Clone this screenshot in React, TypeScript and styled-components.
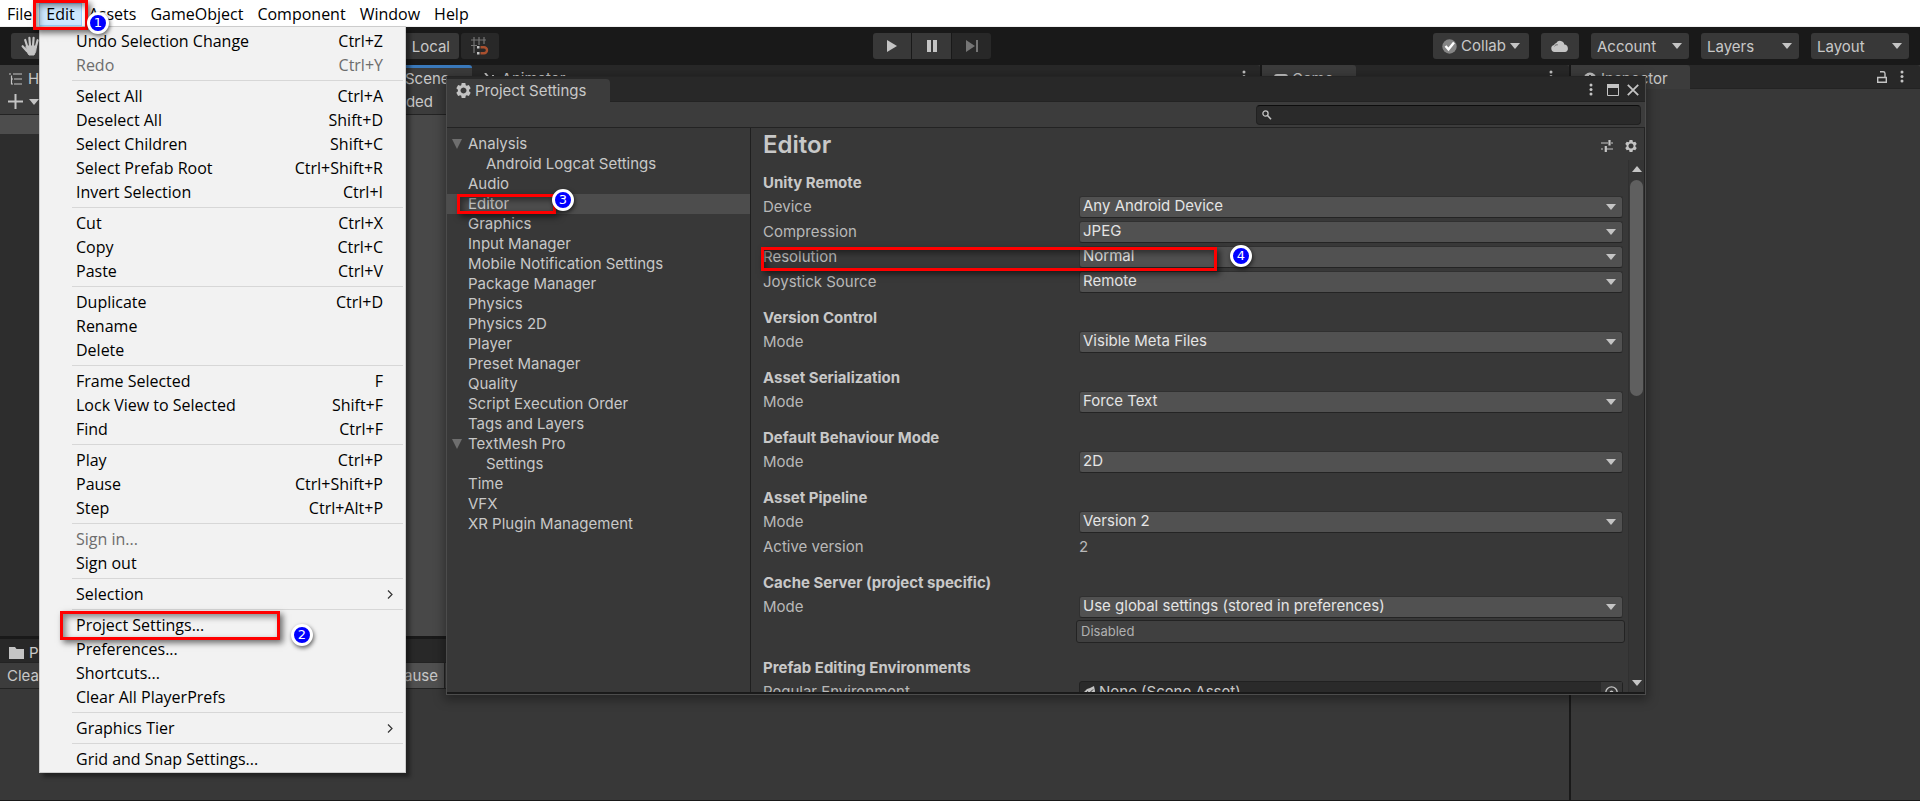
import React from 'react';
import styled, { createGlobalStyle, css } from 'styled-components';

const ui = '"Inter", "Liberation Sans", sans-serif';
const native = '"Open Sans", "Noto Sans CJK SC", sans-serif';

const GlobalStyle = createGlobalStyle`
  *, *::before, *::after { box-sizing: border-box; }
  body { margin: 0; background: #191919; overflow: hidden; }
  button, input, select { font: inherit; color: inherit; margin: 0; }
  h1, h2, ul { margin: 0; padding: 0; }
  ul { list-style: none; }
`;

/* ---------- window frame ---------- */

const Window = styled.div`
  position: relative;
  display: flex;
  flex-direction: column;
  height: 100vh;
  overflow: hidden;
  background: #191919;
  color: #c8c8c8;
  font: 15px/20px ${ui};
`;

const MenuBar = styled.nav`
  display: flex;
  flex: none;
  height: 27px;
  padding-top: 3px;
  background: #fff;
  border-bottom: 1px solid #f0f0f0;
  font: 16px/23px ${native};
`;

const MenuTitle = styled.button<{ $open?: boolean }>`
  height: 23px;
  padding: 0 7px;
  border: 0;
  background: ${(p) => (p.$open ? '#cce8ff' : 'transparent')};
  box-shadow: ${(p) => (p.$open ? 'inset 0 0 0 1px #99d1ff' : 'none')};
  color: #000;
`;

const Toolbar = styled.header`
  display: flex;
  flex: none;
  align-items: center;
  height: 38px;
`;

const ToolGroup = styled.div`
  display: flex;
  gap: 2px;
  flex: 0 0 calc(50% - 87px);
  padding-left: 11px;
`;

const PlayGroup = styled.div`
  display: flex;
  gap: 1px;
`;

const AccountGroup = styled.div`
  display: flex;
  gap: 12px;
  margin-left: auto;
  padding-right: 11px;
`;

const ToolButton = styled.button<{ $width: number; $dim?: boolean; $radius?: string }>`
  display: flex;
  align-items: center;
  justify-content: center;
  gap: 4px;
  width: ${(p) => p.$width}px;
  height: 26px;
  padding: 0;
  border: 0;
  border-radius: ${(p) => p.$radius || '3px'};
  background: ${(p) => (p.$dim ? '#282828' : '#383838')};
  color: #c8c8c8;
`;

const HandButton = styled(ToolButton)`
  justify-content: flex-start;
  padding-left: 10px;
`;

const LocalButton = styled(ToolButton)`
  justify-content: flex-end;
  margin-left: 322px;
  padding: 2px 9px 0 0;
`;

const SelectBox = styled.span<{ $width?: number }>`
  position: relative;
  display: block;
  align-self: start;
  width: ${(p) => (p.$width ? p.$width + 'px' : '100%')};
`;

const ToolSelect = styled.select`
  display: block;
  appearance: none;
  width: 100%;
  height: 26px;
  padding: 2px 6px 0;
  border: 0;
  border-radius: 3px;
  background: #383838;
  color: #c8c8c8;
`;

const SelectArrow = styled.svg`
  position: absolute;
  right: 7px;
  top: 50%;
  margin-top: -3px;
  pointer-events: none;
`;

/* ---------- docked panels ---------- */

const Workspace = styled.main`
  display: flex;
  flex: 1;
  min-height: 0;
  gap: 2px;
  padding-bottom: 1px;
`;

const MainColumn = styled.div`
  display: flex;
  flex: 1;
  flex-direction: column;
  min-width: 0;
  gap: 3px;
`;

const PanelRow = styled.div`
  display: flex;
  flex: 1;
  gap: 2px;
  min-height: 0;
`;

const Panel = styled.section<{ $basis?: number }>`
  display: flex;
  flex-direction: column;
  flex: ${(p) => (p.$basis ? `0 0 ${p.$basis}px` : '1')};
  min-width: 0;
  background: #383838;
`;

const ConsolePanel = styled(Panel)`
  flex: 0 0 161px;
`;

const TabStrip = styled.div`
  display: flex;
  flex: none;
  height: 24px;
  background: #282828;
  border-bottom: 1px solid #232323;
  border-radius: 0 3px 0 0;
`;

const Tab = styled.button<{ $active?: boolean; $focused?: boolean; $tight?: boolean }>`
  display: flex;
  align-items: center;
  gap: ${(p) => (p.$tight ? 5 : 4)}px;
  height: 24px;
  padding: ${(p) => (p.$tight ? '0 22px 0 9px' : '0 22px 0 12px')};
  border: 0;
  border-top: 3px solid transparent;
  border-radius: 0 3px 0 0;
  background: transparent;
  color: #c8c8c8;
  line-height: 20px;
  ${(p) => p.$active && css`background: #3c3c3c;`}
  ${(p) => p.$focused && css`border-top-color: #3a79bb;`}
`;

const StripTools = styled.div<{ $inset?: number }>`
  display: flex;
  align-items: center;
  gap: 13px;
  margin-left: auto;
  padding-right: ${(p) => p.$inset || 14}px;
`;

const PanelTools = styled.div`
  display: flex;
  flex: none;
  align-items: center;
  height: 26px;
  background: #3c3c3c;
  border-bottom: 1px solid #232323;
`;

const HierarchyTools = styled(PanelTools)`
  gap: 6px;
  padding-left: 8px;
`;

const SceneTools = styled(PanelTools)`
  padding-left: 4px;
`;

const ConsoleLeft = styled.div`
  display: flex;
  align-items: center;
  justify-content: space-between;
  flex: 0 0 445px;
  height: 25px;
  border-right: 1px solid #232323;
`;

const FlatButton = styled.button<{ $pressed?: boolean }>`
  height: 25px;
  padding: 0 6px 0 7px;
  border: 0;
  background: ${(p) => (p.$pressed ? '#505050' : 'transparent')};
  color: #c8c8c8;
`;

const HierarchyBody = styled.div`
  flex: 1;
  background: #2d2d2d;
`;

const SceneHeading = styled.div`
  height: 19px;
  background: #4d4d4d;
`;

const SceneView = styled.div`
  flex: 1;
  background: #484848;
`;

/* ---------- drop-down menu ---------- */

const DropMenu = styled.div`
  position: absolute;
  left: 39px;
  top: 26px;
  width: 367px;
  padding: 3px 2px 0 2px;
  border: 1px solid #ccc;
  background: #f2f2f2;
  box-shadow: 4px 4px 4px rgba(0, 0, 0, 0.4);
  color: #000;
  font: 16px/22px ${native};
`;

const MenuItem = styled.button<{ $muted?: boolean }>`
  display: flex;
  align-items: center;
  justify-content: space-between;
  width: 100%;
  height: 24px;
  padding: 0 20px 2px 34px;
  border: 0;
  background: transparent;
  color: ${(p) => (p.$muted ? '#6d6d6d' : '#000')};
  text-align: left;
`;

const SubmenuArrow = styled.svg`
  margin-right: -10px;
`;

const MenuRule = styled.hr`
  height: 1px;
  margin: 2px 0 4px 30px;
  border: 0;
  background: #d7d7d7;
`;

/* ---------- settings window ---------- */

const Dialog = styled.section`
  position: absolute;
  left: 446px;
  right: 274px;
  top: 76px;
  bottom: 106px;
  display: flex;
  flex-direction: column;
  border: 1px solid #4c4c4c;
  border-top-color: #242424;
  background: #383838;
  box-shadow: 0 3px 10px 2px rgba(0, 0, 0, 0.35);
`;

const DialogStrip = styled.div`
  display: flex;
  flex: none;
  align-items: flex-end;
  height: 25px;
  background: #282828;
  box-shadow: inset 0 -1px #232323;
`;

const DialogTab = styled.button`
  display: flex;
  align-items: center;
  gap: 4px;
  height: 23px;
  padding: 0 24px 0 9px;
  border: 0;
  border-radius: 0 4px 0 0;
  background: #3c3c3c;
  color: #c8c8c8;
`;

const WindowButtons = styled.div`
  display: flex;
  align-items: center;
  gap: 8px;
  height: 25px;
  margin-left: auto;
  padding-right: 6px;
`;

const IconButton = styled.button<{ $width?: number }>`
  display: flex;
  align-items: center;
  justify-content: center;
  width: ${(p) => p.$width || 12}px;
  padding: 0;
  border: 0;
  background: transparent;
  color: #c4c4c4;
`;

const SearchBar = styled.div`
  display: flex;
  flex: none;
  justify-content: flex-end;
  align-items: center;
  height: 26px;
  padding-right: 4px;
  background: #3c3c3c;
  border-bottom: 1px solid #232323;
`;

const SearchBox = styled.label`
  display: flex;
  align-items: center;
  gap: 4px;
  width: 385px;
  height: 20px;
  padding-left: 5px;
  border: 1px solid #212121;
  border-top-color: #0d0d0d;
  border-radius: 4px;
  background: #2a2a2a;
`;

const SearchInput = styled.input`
  flex: 1;
  min-width: 0;
  height: 18px;
  padding: 0;
  border: 0;
  outline: 0;
  background: transparent;
`;

const DialogBody = styled.div`
  display: flex;
  flex: 1;
  min-height: 0;
  border-bottom: 2px solid #1a1a1a;
  border-right: 1px solid #232323;
`;

const Tree = styled.ul`
  flex: 0 0 304px;
  padding-top: 6px;
  border-right: 1px solid #1f1f1f;
`;

const TreeItem = styled.li<{ $nested?: boolean; $selected?: boolean }>`
  display: flex;
  align-items: center;
  height: 20px;
  padding-left: ${(p) => (p.$nested ? 39 : 5)}px;
  background: ${(p) => (p.$selected ? '#4d4d4d' : 'transparent')};
`;

const Disclosure = styled.span`
  display: flex;
  width: 16px;
`;

const Page = styled.div`
  display: flex;
  flex: 1;
  flex-direction: column;
  min-width: 0;
`;

const PageHead = styled.div`
  display: flex;
  flex: none;
  align-items: center;
  justify-content: space-between;
  height: 32px;
  padding: 2px 7px 0 12px;
`;

const PageTitle = styled.h1`
  font-size: 24px;
  line-height: 30px;
  font-weight: 600;
`;

const PageIcons = styled.div`
  display: flex;
  align-items: center;
  gap: 12px;
  padding-top: 2px;
`;

const ScrollArea = styled.div`
  display: flex;
  flex: 1;
  min-height: 0;
`;

const Form = styled.form`
  flex: 1;
  min-width: 0;
  overflow: hidden;
  padding: 11px 5px 0 12px;
`;

const Group = styled.fieldset`
  margin: 0 0 10px;
  padding: 0;
  border: 0;
  min-width: 0;
`;

const GroupTitle = styled.legend`
  display: block;
  height: 25px;
  padding: 0;
  font-weight: 700;
  line-height: 23px;
`;

const Row = styled.div`
  display: grid;
  grid-template-columns: 316px minmax(0, 1fr);
  height: 25px;
  color: #b8b8b8;
  line-height: 22px;
`;

const FieldSelect = styled.select`
  display: block;
  appearance: none;
  width: 100%;
  height: 22px;
  padding: 0 3px 2px;
  border: 1px solid #303030;
  border-bottom-color: #242424;
  border-radius: 3px;
  background: #515151;
  color: #e4e4e4;
  line-height: 18px;
`;

const HelpBox = styled.div`
  grid-column: 2;
  height: 23px;
  margin: -1px -2px 0 -3px;
  padding-left: 4px;
  border: 1px solid #232323;
  border-radius: 3px;
  background: #404040;
  color: #b0b0b0;
  font-size: 13px;
  line-height: 21px;
`;

const ObjectField = styled.button`
  display: flex;
  align-items: center;
  gap: 4px;
  height: 22px;
  padding: 0 0 0 4px;
  border: 1px solid #212121;
  border-radius: 3px;
  background: #2a2a2a;
  color: #c8c8c8;
`;

const ObjectPicker = styled.span`
  display: flex;
  align-items: center;
  justify-content: center;
  width: 21px;
  height: 20px;
  margin-left: auto;
  background: #373737;
`;

const ScrollBar = styled.div`
  display: flex;
  flex: 0 0 16px;
  flex-direction: column;
  align-items: center;
  padding: 6px 0;
  border-left: 1px solid #303030;
  background: #353535;
`;

const ScrollTrack = styled.div`
  flex: 1;
  margin: 8px 0;
`;

const ScrollThumb = styled.div`
  width: 13px;
  height: 44%;
  border-radius: 7px;
  background: #5f5f5f;
`;

/* ---------- callouts over the window ---------- */

const Frame = styled.div<{ $x: number; $y: number; $w: number; $h: number }>`
  position: absolute;
  left: ${(p) => p.$x}px;
  top: ${(p) => p.$y}px;
  width: ${(p) => p.$w}px;
  height: ${(p) => p.$h}px;
  border: 3px solid #f00;
  box-shadow: 3px 3px 6px rgba(0, 0, 0, 0.55), inset 3px 3px 6px rgba(0, 0, 0, 0.45);
  pointer-events: none;
`;

const Badge = styled.span<{ $x: number; $y: number }>`
  position: absolute;
  left: ${(p) => p.$x - 11}px;
  top: ${(p) => p.$y - 11}px;
  width: 22px;
  height: 22px;
  border: 3px solid #fff;
  border-radius: 50%;
  background: #00f;
  box-shadow: 1px 2px 4px rgba(0, 0, 0, 0.6);
  color: #fff;
  font: 13px/16px "DejaVu Sans", sans-serif;
  text-align: center;
`;

/* ---------- icons ---------- */

const Caret = ({ w = 10, h = 6, color = '#c4c4c4', up = false }) => (
  <svg width={w} height={h} viewBox="0 0 10 6" preserveAspectRatio="none" fill={color} aria-hidden="true">
    <path d={up ? 'M0 6h10L5 0z' : 'M0 0h10L5 6z'} />
  </svg>
);

const Kebab = () => (
  <svg width="4" height="13" viewBox="0 0 4 13" fill="#c4c4c4" aria-hidden="true">
    <circle cx="2" cy="2" r="1.5" /><circle cx="2" cy="6.5" r="1.5" /><circle cx="2" cy="11" r="1.5" />
  </svg>
);

const Gear = ({ size = 14, hole = 2.6 }) => (
  <svg width={size} height={size} viewBox="0 0 14 14" aria-hidden="true">
    <path
      fill="#c4c4c4"
      fillRule="evenodd"
      d={`M5.3 0h3.4l.4 2 .9.5 2-.6 1.7 2.9L12.2 6.2v1.600l1.500 1.400-1.700 2.900-2-.6-.9.5-.4 2H5.300l-.4-2-.9-.5-2 .6L.3 9.200l1.500-1.400V6.200L.3 4.800 2 1.900l2 .6.9-.5zM7 ${7 - hole}a${hole} ${hole} 0 1 0 .01 0z`}
    />
  </svg>
);

const Hand = () => (
  <svg width="20" height="20" viewBox="0 0 20 20" fill="none" stroke="#c4c4c4" strokeLinecap="round" aria-hidden="true">
    <path strokeWidth="2.2" d="M4.200 4l2.200 7M8.400 1.800l.6 8M12.600 1.800L12 10M16.600 4.200L14.800 11M1.600 10.200l4 4.500" />
    <path fill="#c4c4c4" strokeWidth="1" d="M5.500 10h10l-.8 5.500-1.700 3.500H8L5 14.500z" />
  </svg>
);

const SnapGrid = () => (
  <svg width="18" height="18" viewBox="0 0 18 18" fill="none" aria-hidden="true">
    <path stroke="#757575" strokeWidth="1.2" d="M3 0v16M8 0v8M13 0v7M0 3h15M0 8.500h6" />
    <path stroke="#a9502f" strokeWidth="2.4" d="M9.500 10.200h3.500a3 3 0 0 1 0 6H9.500" />
    <path fill="#c4c4c4" d="M6 9h2.500v2.400H6zM6 15h2.500v2.400H6z" />
  </svg>
);

const Cloud = () => (
  <svg width="18" height="12" viewBox="0 0 18 12" fill="#c4c4c4" aria-hidden="true">
    <path d="M3.500 12A3.500 3.500 0 0 1 3 5.100 3.200 3.200 0 0 1 5.300 3 4.300 4.300 0 0 1 13.300 4.600 3.800 3.800 0 0 1 14.300 12z" />
    <path d="M3.500 6.200a3 3 0 0 1 3.300-1.400" stroke="#6a6a6a" strokeWidth="1" fill="none" />
  </svg>
);

const CheckBall = () => (
  <svg width="15" height="15" viewBox="0 0 15 15" aria-hidden="true">
    <circle cx="7.5" cy="7.5" r="7.2" fill="#858585" />
    <path d="M3.500 7l3 3.300L12 3.600" fill="none" stroke="#fff" strokeWidth="2.4" />
  </svg>
);

const ListIcon = () => (
  <svg width="14" height="12" viewBox="0 0 14 12" fill="none" stroke="#c4c4c4" strokeWidth="1.2" aria-hidden="true">
    <path d="M0 1h2M4 1h9M5 6h8M5 11h8M2.500 2.500v9M2.500 6h1.500M2.500 11h1.500" />
  </svg>
);

const Folder = () => (
  <svg width="15" height="12" viewBox="0 0 15 12" fill="#c4c4c4" aria-hidden="true">
    <path d="M0 0h6l1.500 2H15v10H0z" />
  </svg>
);

const Plus = () => (
  <svg width="15" height="15" viewBox="0 0 15 15" stroke="#c4c4c4" strokeWidth="2" aria-hidden="true">
    <path d="M7.500 0v15M0 7.500h15" />
  </svg>
);

const Lock = () => (
  <svg width="10" height="12" viewBox="0 0 10 12" fill="none" stroke="#c4c4c4" strokeWidth="1.4" aria-hidden="true">
    <path d="M.7 6.500h8.600v4.800H.7zM8 6V2.500A1.800 1.800 0 0 0 6.200.8H3" />
  </svg>
);

const InfoBall = () => (
  <svg width="14" height="14" viewBox="0 0 14 14" aria-hidden="true">
    <circle cx="7" cy="7" r="6.5" fill="#c4c4c4" />
    <path d="M6 3h2v2H6zM6 6h2v5H6z" fill="#3c3c3c" />
  </svg>
);

const SlidersIcon = () => (
  <svg width="12" height="12" viewBox="0 0 12 12" fill="none" stroke="#c4c4c4" aria-hidden="true">
    <path strokeWidth="1.2" d="M0 3h7M10 3h2M0 9h2M5 9h7" />
    <path strokeWidth="2.2" d="M8.500 0v5.500M4.800 6v6" />
  </svg>
);

const menu: (null | [string, string?, ('muted' | 'sub')?])[] = [
  ['Undo Selection Change', 'Ctrl+Z'], ['Redo', 'Ctrl+Y', 'muted'], null,
  ['Select All', 'Ctrl+A'], ['Deselect All', 'Shift+D'], ['Select Children', 'Shift+C'],
  ['Select Prefab Root', 'Ctrl+Shift+R'], ['Invert Selection', 'Ctrl+I'], null,
  ['Cut', 'Ctrl+X'], ['Copy', 'Ctrl+C'], ['Paste', 'Ctrl+V'], null,
  ['Duplicate', 'Ctrl+D'], ['Rename'], ['Delete'], null,
  ['Frame Selected', 'F'], ['Lock View to Selected', 'Shift+F'], ['Find', 'Ctrl+F'], null,
  ['Play', 'Ctrl+P'], ['Pause', 'Ctrl+Shift+P'], ['Step', 'Ctrl+Alt+P'], null,
  ['Sign in...', '', 'muted'], ['Sign out'], null,
  ['Selection', '', 'sub'], null,
  ['Project Settings...'], ['Preferences...'], ['Shortcuts...'], ['Clear All PlayerPrefs'], null,
  ['Graphics Tier', '', 'sub'], null,
  ['Grid and Snap Settings...'],
];

const tree: [string, ('open' | 'nested' | 'selected')?][] = [
  ['Analysis', 'open'], ['Android Logcat Settings', 'nested'], ['Audio'], ['Editor', 'selected'],
  ['Graphics'], ['Input Manager'], ['Mobile Notification Settings'], ['Package Manager'],
  ['Physics'], ['Physics 2D'], ['Player'], ['Preset Manager'], ['Quality'],
  ['Script Execution Order'], ['Tags and Layers'], ['TextMesh Pro', 'open'], ['Settings', 'nested'],
  ['Time'], ['VFX'], ['XR Plugin Management'],
];

const Arrow = () => (
  <SelectArrow width="10" height="6" viewBox="0 0 10 6" fill="#c4c4c4" aria-hidden="true">
    <path d="M0 0h10L5 6z" />
  </SelectArrow>
);

const Option = ({ id, label, value }: { id: string; label: string; value: string }) => (
  <Row>
    <label htmlFor={id}>{label}</label>
    <SelectBox>
      <FieldSelect id={id}><option>{value}</option></FieldSelect>
      <Arrow />
    </SelectBox>
  </Row>
);

const ToolDropdown = ({ label }: { label: string }) => (
  <SelectBox $width={98}>
    <ToolSelect aria-label={label}><option>{label}</option></ToolSelect>
    <Arrow />
  </SelectBox>
);

export default function App() {
  return (
    <Window>
      <GlobalStyle />
      <MenuBar>
        {['File', 'Edit', 'Assets', 'GameObject', 'Component', 'Window', 'Help'].map((t) => (
          <MenuTitle key={t} $open={t === 'Edit'}>{t}</MenuTitle>
        ))}
      </MenuBar>

      <Toolbar>
        <ToolGroup>
          <HandButton $width={40} aria-label="Hand tool"><Hand /></HandButton>
          <LocalButton $width={84}>Local</LocalButton>
          <ToolButton $width={38} $dim aria-label="Grid snapping"><SnapGrid /></ToolButton>
        </ToolGroup>
        <PlayGroup>
          <ToolButton $width={38} $radius="3px 0 0 3px" aria-label="Play">
            <svg width="10" height="12" viewBox="0 0 10 12" fill="#c4c4c4"><path d="M0 0l10 6-10 6z" /></svg>
          </ToolButton>
          <ToolButton $width={39} $radius="0" aria-label="Pause">
            <svg width="10" height="12" viewBox="0 0 10 12" fill="#c4c4c4"><path d="M0 0h4v12H0zM6 0h4v12H6z" /></svg>
          </ToolButton>
          <ToolButton $width={39} $radius="0 3px 3px 0" $dim aria-label="Step">
            <svg width="12" height="12" viewBox="0 0 12 12" fill="#757575"><path d="M0 0l9 6-9 6zM10 0h2v12h-2z" /></svg>
          </ToolButton>
        </PlayGroup>
        <AccountGroup>
          <ToolButton $width={96}><CheckBall />Collab<Caret /></ToolButton>
          <ToolButton $width={38} aria-label="Services"><Cloud /></ToolButton>
          <ToolDropdown label="Account" />
          <ToolDropdown label="Layers" />
          <ToolDropdown label="Layout" />
        </AccountGroup>
      </Toolbar>

      <Workspace>
        <MainColumn>
          <PanelRow>
            <Panel $basis={373}>
              <TabStrip><Tab $active $tight><ListIcon />Hierarchy</Tab></TabStrip>
              <HierarchyTools><Plus /><Caret /></HierarchyTools>
              <HierarchyBody><SceneHeading /></HierarchyBody>
            </Panel>
            <Panel>
              <TabStrip>
                <Tab $active $focused>
                  <svg width="14" height="12" viewBox="0 0 14 12" stroke="#c4c4c4" fill="none"><path d="M4 0v12M10 0v12M0 4h14M0 8h14" /></svg>
                  Scene
                </Tab>
                <Tab>
                  <svg width="14" height="12" viewBox="0 0 14 12" stroke="#c4c4c4" strokeWidth="2" fill="none"><path d="M1 0l4 5-4 5M8 3h2M8 8h5" /></svg>
                  Animator
                </Tab>
                <StripTools><Kebab /></StripTools>
              </TabStrip>
              <SceneTools>Shaded</SceneTools>
              <SceneView />
            </Panel>
            <Panel $basis={307}>
              <TabStrip>
                <Tab $active>
                  <svg width="14" height="10" viewBox="0 0 14 10" fill="#c4c4c4"><rect width="14" height="10" rx="3" /></svg>
                  Game
                </Tab>
                <StripTools $inset={16}><Kebab /></StripTools>
              </TabStrip>
            </Panel>
          </PanelRow>
          <ConsolePanel>
            <TabStrip><Tab $tight><Folder />Project</Tab></TabStrip>
            <PanelTools>
              <ConsoleLeft>
                <FlatButton>Clear</FlatButton>
                <FlatButton $pressed>Error Pause</FlatButton>
              </ConsoleLeft>
            </PanelTools>
          </ConsolePanel>
        </MainColumn>
        <Panel $basis={349}>
          <TabStrip>
            <Tab $active><InfoBall />Inspector</Tab>
            <StripTools $inset={16}><Lock /><Kebab /></StripTools>
          </TabStrip>
        </Panel>
      </Workspace>

      <Dialog aria-label="Project Settings">
        <DialogStrip>
          <DialogTab><Gear size={15} hole={2.8} />Project Settings</DialogTab>
          <WindowButtons>
            <IconButton $width={16} aria-label="More"><Kebab /></IconButton>
            <IconButton aria-label="Maximize">
              <svg width="12" height="12" viewBox="0 0 12 12"><path d="M.5.5h11v11H.5z" fill="none" stroke="#c4c4c4" /><path d="M0 0h12v4H0z" fill="#c4c4c4" /></svg>
            </IconButton>
            <IconButton aria-label="Close">
              <svg width="12" height="12" viewBox="0 0 12 12" stroke="#c4c4c4" strokeWidth="1.8"><path d="M.8.8l10.400 10.400M11.200.8L.8 11.200" /></svg>
            </IconButton>
          </WindowButtons>
        </DialogStrip>
        <SearchBar>
          <SearchBox>
            <svg width="10" height="10" viewBox="0 0 10 10" fill="none" stroke="#c4c4c4"><circle cx="3.5" cy="3.5" r="2.6" strokeWidth="1.3" /><path d="M5.500 5.500L9 9.200" strokeWidth="1.6" /></svg>
            <SearchInput aria-label="Search settings" />
          </SearchBox>
        </SearchBar>
        <DialogBody>
          <Tree>
            {tree.map(([name, kind]) => (
              <TreeItem key={name} $nested={kind === 'nested'} $selected={kind === 'selected'}>
                {kind !== 'nested' && (
                  <Disclosure>{kind === 'open' && <Caret w={10} h={10} color="#6e6e6e" />}</Disclosure>
                )}
                {name}
              </TreeItem>
            ))}
          </Tree>
          <Page>
            <PageHead>
              <PageTitle>Editor</PageTitle>
              <PageIcons>
                <IconButton aria-label="Presets"><SlidersIcon /></IconButton>
                <IconButton aria-label="Options"><Gear size={12} hole={3} /></IconButton>
              </PageIcons>
            </PageHead>
            <ScrollArea>
              <Form>
                <Group>
                  <GroupTitle>Unity Remote</GroupTitle>
                  <Option id="device" label="Device" value="Any Android Device" />
                  <Option id="compression" label="Compression" value="JPEG" />
                  <Option id="resolution" label="Resolution" value="Normal" />
                  <Option id="joystick" label="Joystick Source" value="Remote" />
                </Group>
                <Group>
                  <GroupTitle>Version Control</GroupTitle>
                  <Option id="vcs" label="Mode" value="Visible Meta Files" />
                </Group>
                <Group>
                  <GroupTitle>Asset Serialization</GroupTitle>
                  <Option id="serialization" label="Mode" value="Force Text" />
                </Group>
                <Group>
                  <GroupTitle>Default Behaviour Mode</GroupTitle>
                  <Option id="behaviour" label="Mode" value="2D" />
                </Group>
                <Group>
                  <GroupTitle>Asset Pipeline</GroupTitle>
                  <Option id="pipeline" label="Mode" value="Version 2" />
                  <Row><span>Active version</span><span>2</span></Row>
                </Group>
                <Group>
                  <GroupTitle>Cache Server (project specific)</GroupTitle>
                  <Option id="cache" label="Mode" value="Use global settings (stored in preferences)" />
                  <Row><HelpBox>Disabled</HelpBox></Row>
                </Group>
                <Group>
                  <GroupTitle>Prefab Editing Environments</GroupTitle>
                  <Row>
                    <label htmlFor="environment">Regular Environment</label>
                    <ObjectField id="environment" type="button">
                      <svg width="11" height="12" viewBox="0 0 11 12" fill="#c4c4c4"><path d="M0 6l3-3 3-1 4-2 1 5-1 7-2-1V7L6 9 5 12l-2-1 1-3-3 1z" /><path d="M3 5.500l2.500 1.500L9 3.500" stroke="#2a2a2a" fill="none" /></svg>
                      None (Scene Asset)
                      <ObjectPicker>
                        <svg width="13" height="13" viewBox="0 0 13 13"><circle cx="6.5" cy="6.5" r="5.7" fill="none" stroke="#c4c4c4" strokeWidth="1.3" /><circle cx="6.5" cy="6.5" r="2" fill="#c4c4c4" /></svg>
                      </ObjectPicker>
                    </ObjectField>
                  </Row>
                </Group>
              </Form>
              <ScrollBar>
                <Caret up />
                <ScrollTrack><ScrollThumb /></ScrollTrack>
                <Caret />
              </ScrollBar>
            </ScrollArea>
          </Page>
        </DialogBody>
      </Dialog>

      <DropMenu>
        {menu.map((m, i) =>
          m ? (
            <MenuItem key={i} $muted={m[2] === 'muted'}>
              <span>{m[0]}</span>
              {m[1] && <span>{m[1]}</span>}
              {m[2] === 'sub' && (
                <SubmenuArrow width="6" height="9" viewBox="0 0 6 9" fill="none" stroke="#333" strokeWidth="1.2"><path d="M1 .5l4 4-4 4" /></SubmenuArrow>
              )}
            </MenuItem>
          ) : (
            <MenuRule key={i} />
          ),
        )}
      </DropMenu>

      <Frame $x={33} $y={0} $w={55} $h={30} />
      <Frame $x={60} $y={611} $w={220} $h={29} />
      <Frame $x={457} $y={194} $w={99} $h={20} />
      <Frame $x={761} $y={247} $w={456} $h={24} />
      <Badge $x={98} $y={23}>1</Badge>
      <Badge $x={302} $y={635}>2</Badge>
      <Badge $x={563} $y={200}>3</Badge>
      <Badge $x={1241} $y={256}>4</Badge>
    </Window>
  );
}
